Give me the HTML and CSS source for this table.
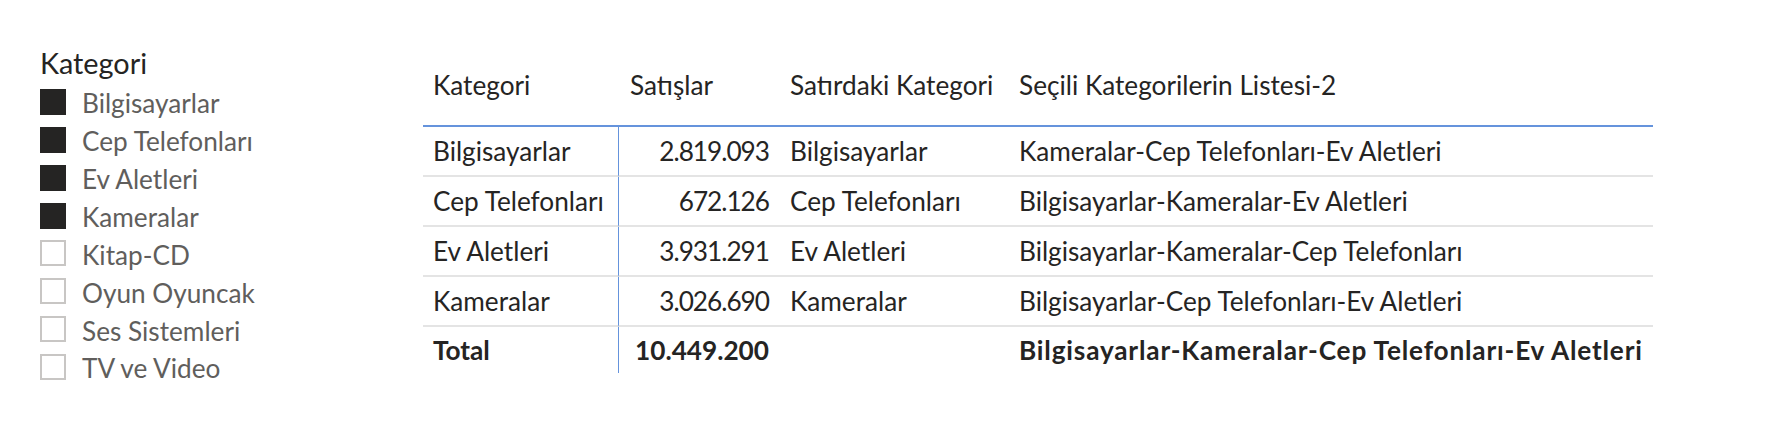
FILE: index.html
```html
<!DOCTYPE html>
<html lang="tr">
<head>
<meta charset="utf-8">
<title>Kategori</title>
<link rel="stylesheet" href="styles.css">
</head>
<body>
<div class="page">
  <section class="slicer">
    <div class="slicer-title">Kategori</div>
    <ul class="slicer-list">
      <li class="slicer-item"><span class="box checked"></span><span class="label">Bilgisayarlar</span></li>
      <li class="slicer-item"><span class="box checked"></span><span class="label">Cep Telefonları</span></li>
      <li class="slicer-item"><span class="box checked"></span><span class="label">Ev Aletleri</span></li>
      <li class="slicer-item"><span class="box checked"></span><span class="label">Kameralar</span></li>
      <li class="slicer-item"><span class="box"></span><span class="label">Kitap-CD</span></li>
      <li class="slicer-item"><span class="box"></span><span class="label">Oyun Oyuncak</span></li>
      <li class="slicer-item"><span class="box"></span><span class="label">Ses Sistemleri</span></li>
      <li class="slicer-item"><span class="box"></span><span class="label">TV ve Video</span></li>
    </ul>
  </section>
  <table class="grid">
    <colgroup>
      <col class="c1"><col class="c2"><col class="c3"><col class="c4">
    </colgroup>
    <thead>
      <tr>
        <th>Kategori</th>
        <th>Satışlar</th>
        <th>Satırdaki Kategori</th>
        <th>Seçili Kategorilerin Listesi-2</th>
      </tr>
    </thead>
    <tbody>
      <tr>
        <td class="first">Bilgisayarlar</td>
        <td class="num">2.819.093</td>
        <td>Bilgisayarlar</td>
        <td>Kameralar-Cep Telefonları-Ev Aletleri</td>
      </tr>
      <tr>
        <td class="first">Cep Telefonları</td>
        <td class="num">672.126</td>
        <td>Cep Telefonları</td>
        <td>Bilgisayarlar-Kameralar-Ev Aletleri</td>
      </tr>
      <tr>
        <td class="first">Ev Aletleri</td>
        <td class="num">3.931.291</td>
        <td>Ev Aletleri</td>
        <td>Bilgisayarlar-Kameralar-Cep Telefonları</td>
      </tr>
      <tr>
        <td class="first">Kameralar</td>
        <td class="num">3.026.690</td>
        <td>Kameralar</td>
        <td>Bilgisayarlar-Cep Telefonları-Ev Aletleri</td>
      </tr>
    </tbody>
    <tfoot>
      <tr>
        <td class="first">Total</td>
        <td class="num">10.449.200</td>
        <td></td>
        <td class="wide">Bilgisayarlar-Kameralar-Cep Telefonları-Ev Aletleri</td>
      </tr>
    </tfoot>
  </table>
</div>
</body>
</html>
```
FILE: styles.css
```css
html, body {
  margin: 0;
  padding: 0;
  background: #ffffff;
}

body {
  font-family: "Lato", "Open Sans", sans-serif;
  color: #252423;
}

.page {
  display: flex;
  align-items: flex-start;
  padding: 45px 0 0 40px;
}

/* Slicer */
.slicer {
  width: 383px;
  flex: none;
}

.slicer-title {
  font-size: 28.8px;
  line-height: 36px;
  color: #252423;
  margin-bottom: 2px;
}

.slicer-list {
  list-style: none;
  margin: 0;
  padding: 0;
}

.slicer-item {
  display: flex;
  align-items: center;
  height: 37.86px;
}

.box {
  width: 26px;
  height: 26px;
  box-sizing: border-box;
  border: 2px solid #c8c6c4;
  background: #ffffff;
  flex: none;
}

.box.checked {
  background: #252423;
  border-color: #252423;
}

.label {
  margin-left: 16px;
  margin-top: 3px;
  font-size: 26.2px;
  line-height: 30px;
  color: #605e5c;
  white-space: nowrap;
}

/* Table */
.grid {
  margin-top: 15px;
  border-collapse: separate;
  border-spacing: 0;
  table-layout: fixed;
  width: 1230px;
  font-size: 26.2px;
  color: #252423;
}

.c1 { width: 196px; }
.c2 { width: 160px; }
.c3 { width: 229px; }
.c4 { width: 645px; }

.grid th,
.grid td {
  padding: 0 10px;
  white-space: nowrap;
  overflow: hidden;
  text-align: left;
}

.grid th {
  font-weight: 400;
  line-height: 50px;
  padding-bottom: 15px;
  vertical-align: top;
  border-bottom: 2px solid #6593dc;
}

.grid th:nth-child(n+2),
.grid td:nth-child(n+2) {
  padding-left: 11px;
}

.grid tbody td {
  line-height: 48px;
  border-bottom: 2px solid #e4e4e4;
}

.grid td.first {
  border-right: 1px solid #6593dc;
}

.grid td.num {
  text-align: right;
  padding-right: 10px;
  letter-spacing: -1px;
}

.grid tfoot td {
  line-height: 46px;
  font-weight: 700;
}

.grid tfoot td.num {
  letter-spacing: 0;
}

.grid tfoot td.wide {
  letter-spacing: 0.83px;
}
```
